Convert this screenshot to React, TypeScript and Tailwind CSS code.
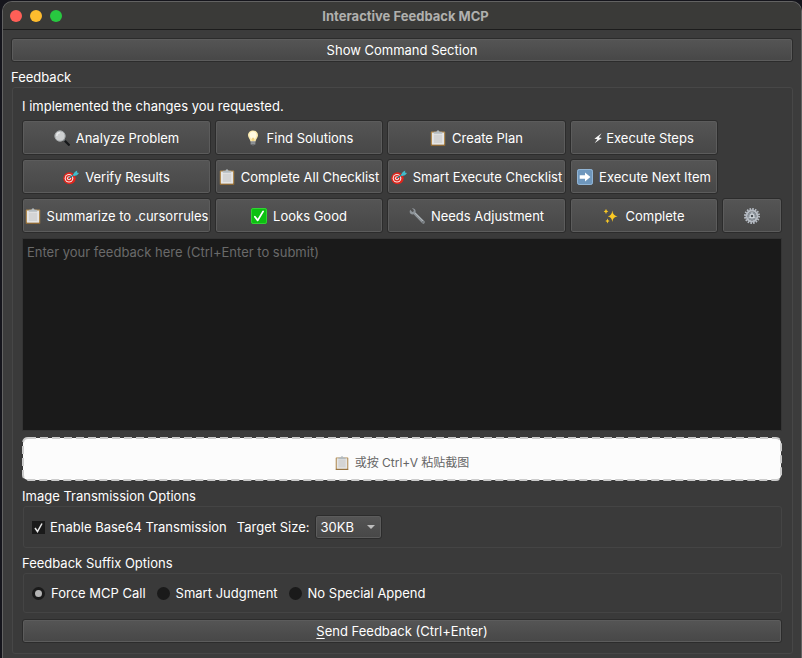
import { useState, type ReactNode } from "react";

const raised =
  "border border-[#2c2c2c] rounded-[3px] bg-linear-to-b from-[#555555] to-[#474747] shadow-[inset_0_0_0_1px_#5c5c5c]";

function Clipboard({ className = "w-4 h-4" }: { className?: string }) {
  return (
    <svg viewBox="0 0 16 16" className={className} aria-hidden="true">
      <rect x="0.8" y="1.6" width="14.4" height="14.2" rx="0.8" fill="#b08a50" />
      <rect x="0.8" y="14.6" width="14.4" height="1.2" rx="0.5" fill="#8a6430" />
      <rect x="2" y="2.6" width="12" height="12" fill="#e6e6e6" />
      <rect x="3.8" y="4.6" width="8.4" height="8.4" fill="#d4d4d4" />
      <path d="M3.8 3.8V2.4q0-.6.8-.6h1.8Q6.700.2 8 .2t1.600 1.600h1.800q.8 0 .8.6v1.400z" fill="#b4bbbf" />
    </svg>
  );
}

function Magnifier() {
  return (
    <svg viewBox="0 0 16 16" className="h-4 w-4" aria-hidden="true">
      <path d="M9.5 9.5l2 2" stroke="#8c9296" strokeWidth="1.6" />
      <path d="M11.300 11.300l3.500 3.500" stroke="#151719" strokeWidth="2.300" strokeLinecap="round" />
      <circle cx="6" cy="6" r="5.200" fill="#cdcfd0" stroke="#a2a6a8" strokeWidth="1" />
      <path d="M2.800 6A3.400 3.400 0 0 1 6 2.700" stroke="#e8eaeb" strokeWidth="1.300" fill="none" />
    </svg>
  );
}

function Bulb() {
  return (
    <svg viewBox="0 0 16 16" className="h-4 w-4" aria-hidden="true">
      <path d="M8 .4C4.900.4 3 2.600 3 5.200c0 2.300 2 3.400 2.500 6.300h5C11 8.600 13 7.500 13 5.200 13 2.600 11.100.4 8 .4z" fill="#fbeab0" />
      <path d="M8 1.600c-2.200 0-3.500 1.600-3.500 3.500 0 1.500 1 2.600 1.800 4h3.400c.8-1.400 1.800-2.500 1.800-4C11.500 3.200 10.200 1.600 8 1.600z" fill="#fffae2" />
      <path d="M7.300 11V8l.7.6.7-.6v3" fill="none" stroke="#e6bd58" strokeWidth="0.600" />
      <rect x="5.700" y="11.300" width="4.600" height="3.200" fill="#a3a7aa" />
      <path d="M5.700 12.500h4.600M5.700 13.800h4.600" stroke="#6d7174" strokeWidth="0.500" />
      <path d="M6.500 14.500h3l-.7 1.200H7.200z" fill="#606366" />
    </svg>
  );
}

function Target() {
  return (
    <svg viewBox="0 0 16 16" className="h-4 w-4" aria-hidden="true">
      <ellipse cx="6.500" cy="9.200" rx="6.200" ry="6" fill="#e0251c" />
      <circle cx="6" cy="9.300" r="4.300" fill="#f4e9e7" />
      <circle cx="6" cy="9.300" r="3.200" fill="#e0251c" />
      <circle cx="6" cy="9.300" r="2" fill="#f4e9e7" />
      <circle cx="6" cy="9.300" r="1" fill="#e0251c" />
      <path d="M6.300 9L12 5" stroke="#20808c" strokeWidth="1.300" />
      <path d="M9.800 6L11.800 3 14.200 1.500 14 3.600 16 4 14 6.200 11 7z" fill="#41bccb" />
    </svg>
  );
}

function Wrench() {
  return (
    <svg viewBox="0 0 16 16" className="h-4 w-4" aria-hidden="true">
      <path
        d="M1.200 1.800L3.300 3.900 4.600 3.500 4.800 2.100 2.900.3C4.500-.1 6.400.9 6.600 2.700c.1.700 0 1.200-.1 1.600l8.800 8.600c.8.900.5 2-.1 2.500-.7.500-1.500.400-2.200-.3L4.600 6.300c-1 .3-2.200.2-3.100-.6C.4 4.700.5 3 1.200 1.800z"
        fill="#8e9499"
      />
      <path d="M6 5l8 8" stroke="#bcc1c5" strokeWidth="0.700" />
      <circle cx="13.900" cy="14" r="0.700" fill="#54585b" />
    </svg>
  );
}

function Check() {
  return (
    <svg viewBox="0 0 16 16" className="h-4 w-4" aria-hidden="true">
      <rect width="16" height="16" rx="2" fill="#0cc011" />
      <rect x="0.500" y="0.500" width="15" height="15" rx="1.600" fill="none" stroke="#3bdb3c" strokeWidth="0.800" />
      <path d="M3.900 8.800l2.800 3.600 5.400-9" fill="none" stroke="#fff" strokeWidth="1.800" strokeLinejoin="round" strokeLinecap="round" />
    </svg>
  );
}

function Arrow() {
  return (
    <svg viewBox="0 0 16 16" className="h-4 w-4" aria-hidden="true">
      <rect width="16" height="16" rx="2.400" fill="#6f97bd" />
      <rect x="0.500" y="0.500" width="15" height="15" rx="2" fill="none" stroke="#96b9d8" strokeWidth="0.900" />
      <path d="M2.700 6.300h5.300V3.600l5.400 4.400-5.400 4.400V9.700H2.700z" fill="#fff" />
    </svg>
  );
}

function Sparkles() {
  return (
    <svg viewBox="0 0 16 16" className="h-4 w-4" aria-hidden="true">
      <g fill="#fbc924">
        <path d="M9.300 2.400q.5 5 5.300 5.800-4.800.8-5.300 5.800-.5-5-4.500-5.800 4-.8 4.500-5.800z" />
        <path d="M3 .8q.3 2.300 2.300 2.700Q3.300 3.900 3 6.200 2.700 3.900.7 3.500 2.700 3.100 3 .8z" />
        <path d="M4.500 10.400q.3 2.200 2.200 2.600-1.900.4-2.200 2.500-.3-2.100-2.200-2.500 1.900-.4 2.200-2.600z" />
      </g>
    </svg>
  );
}

function Bolt() {
  return (
    <svg viewBox="0 0 8 12" className="h-3 w-2" aria-hidden="true">
      <path d="M7.600 1.200L.4 6.700l3 .6L.6 11.300 7.800 6l-3-.6z" fill="#f6f6f6" />
    </svg>
  );
}

function Gear() {
  return (
    <svg viewBox="0 0 16 16" className="h-4 w-4" aria-hidden="true">
      <circle cx="8" cy="8" r="7" fill="none" stroke="#b4bac2" strokeWidth="2" strokeDasharray="1.600 1.149" />
      <circle cx="8" cy="8" r="5.400" fill="none" stroke="#b4bac2" strokeWidth="2" />
      <circle cx="8" cy="8" r="4.200" fill="#8a929a" />
      <path d="M8 8V3.500M8 8l4 2.300M8 8l-4 2.300" stroke="#c0c6cc" strokeWidth="1" />
      <circle cx="8" cy="8" r="1.900" fill="#4c5258" stroke="#d2d8de" strokeWidth="1.200" />
    </svg>
  );
}

const actions: { label: string; icon: ReactNode; tight?: boolean }[][] = [
  [
    { label: "Analyze Problem", icon: <Magnifier /> },
    { label: "Find Solutions", icon: <Bulb /> },
    { label: "Create Plan", icon: <Clipboard /> },
    { label: "Execute Steps", icon: <Bolt />, tight: true },
  ],
  [
    { label: "Verify Results", icon: <Target /> },
    { label: "Complete All Checklist", icon: <Clipboard /> },
    { label: "Smart Execute Checklist", icon: <Target /> },
    { label: "Execute Next Item", icon: <Arrow /> },
  ],
  [
    { label: "Summarize to .cursorrules", icon: <Clipboard /> },
    { label: "Looks Good", icon: <Check /> },
    { label: "Needs Adjustment", icon: <Wrench /> },
    { label: "Complete", icon: <Sparkles /> },
  ],
];

const suffixes = ["Force MCP Call", "Smart Judgment", "No Special Append"];

export default function App() {
  const [suffix, setSuffix] = useState(suffixes[0]);
  const [base64, setBase64] = useState(true);

  return (
    <div className="bg-[#15151c] pt-px pl-[2px] font-['Inter','Noto_Sans_CJK_SC',sans-serif] text-[13px] leading-4 font-normal text-white">
      <div className="min-h-[calc(100vh-1px)] overflow-hidden rounded-t-[10px] border border-b-0 border-[#626262] bg-[#3c3c3c]">
        <header className="flex h-7 items-center border-b border-[#1c1c1c] bg-[#3a3a38]">
          <div className="flex flex-1 gap-2 pl-[7px]">
            <button aria-label="Close" className="h-3 w-3 rounded-full bg-[#ff5f57]" />
            <button aria-label="Minimize" className="h-3 w-3 rounded-full bg-[#febc2e]" />
            <button aria-label="Zoom" className="h-3 w-3 rounded-full bg-[#28c840]" />
          </div>
          <h1 className="font-bold text-[#b0b0ae]">Interactive Feedback MCP</h1>
          <div className="flex-1" />
        </header>

        <main className="px-2 pt-2 pb-1">
          <button className={`h-6 w-full ${raised}`}>Show Command Section</button>
          <h2 className="mt-[7px] mb-[2px]">Feedback</h2>
          <section className="ml-px rounded-[3px] border border-[#474747] bg-[#3a3a3a] pt-[10px] pr-[10px] pb-[10px] pl-[9px]">
            <p>I implemented the changes you requested.</p>

            <div className="mt-[6px] grid grid-cols-[minmax(0,189fr)_minmax(0,168fr)_minmax(0,179fr)_minmax(0,148fr)_minmax(0,60fr)] gap-1">
              {actions.map((row, r) => (
                <div key={r} className="col-span-5 grid grid-cols-subgrid">
                  {row.map(({ label, icon, tight }) => (
                    <button
                      key={label}
                      className={`flex h-[35px] items-center justify-center whitespace-nowrap ${tight ? "gap-1" : "gap-[6px]"} ${raised}`}
                    >
                      <span className="shrink-0">{icon}</span>
                      {label}
                    </button>
                  ))}
                  {r === 2 && (
                    <button aria-label="Settings" className={`flex h-[35px] items-center justify-center ${raised}`}>
                      <Gear />
                    </button>
                  )}
                </div>
              ))}
            </div>

            <textarea
              aria-label="Feedback"
              placeholder="Enter your feedback here (Ctrl+Enter to submit)"
              className="mt-[5px] block h-[193px] w-full resize-none border border-[#343434] bg-[#1a1a1a] px-1 py-[5px] outline-none placeholder:text-[#6a6a6a]"
            />

            <div className="relative mt-[6px] flex h-11 items-center justify-center gap-[6px] pt-2 text-xs text-[#666666]">
              <svg className="absolute inset-0 h-full w-full" aria-hidden="true">
                <rect x="1" y="1" rx="5" className="h-[calc(100%-2px)] w-[calc(100%-2px)]" fill="#fcfcfc" stroke="#cccccc" strokeWidth="2" strokeDasharray="8 4" />
              </svg>
              <Clipboard className="relative h-[14px] w-[14px]" />
              <span className="relative">或按 Ctrl+V 粘贴截图</span>
            </div>

            <h3 className="mt-[7px] mb-[2px]">Image Transmission Options</h3>
            <div className="ml-px flex h-[42px] items-center rounded-[3px] border border-[#444444] px-2">
              <label className="flex items-center gap-[5px]">
                <span className="relative grid h-[13px] w-[13px] place-items-center">
                  <input
                    type="checkbox"
                    checked={base64}
                    onChange={(e) => setBase64(e.target.checked)}
                    className="peer col-start-1 row-start-1 h-[13px] w-[13px] appearance-none bg-[#1a1a1a]"
                  />
                  <svg viewBox="0 0 13 13" className="pointer-events-none invisible col-start-1 row-start-1 h-[13px] w-[13px] peer-checked:visible" aria-hidden="true">
                    <path d="M3 7l2.500 3.500L10 2.500" fill="none" stroke="#e8e8e8" strokeWidth="1.500" />
                  </svg>
                </span>
                Enable Base64 Transmission
              </label>
              <label htmlFor="target" className="ml-[10px]">Target Size:</label>
              <div className="relative ml-[6px]">
                <select id="target" className={`block h-6 w-[67px] appearance-none pl-1 ${raised}`}>
                  <option>30KB</option>
                </select>
                <svg viewBox="0 0 8 4" className="pointer-events-none absolute top-[10px] right-[7px] h-1 w-2" aria-hidden="true">
                  <path d="M0 0h8L4 4z" fill="#bdbdbd" />
                </svg>
              </div>
            </div>

            <h3 className="mt-[7px] mb-[2px]">Feedback Suffix Options</h3>
            <div className="ml-px flex h-10 items-center gap-[11px] rounded-[3px] border border-[#444444] px-2">
              {suffixes.map((name) => (
                <label key={name} className="flex items-center gap-[6px]">
                  <input
                    type="radio"
                    name="suffix"
                    checked={suffix === name}
                    onChange={() => setSuffix(name)}
                    className="h-[13px] w-[13px] appearance-none rounded-full bg-[#1a1a1a] checked:border-[3px] checked:border-[#1a1a1a] checked:bg-[#b4b4b4]"
                  />
                  {name}
                </label>
              ))}
            </div>

            <button className={`mt-[6px] h-6 w-full ${raised}`}>
              <span className="underline underline-offset-2">S</span>end Feedback (Ctrl+Enter)
            </button>
          </section>
        </main>
      </div>
    </div>
  );
}
